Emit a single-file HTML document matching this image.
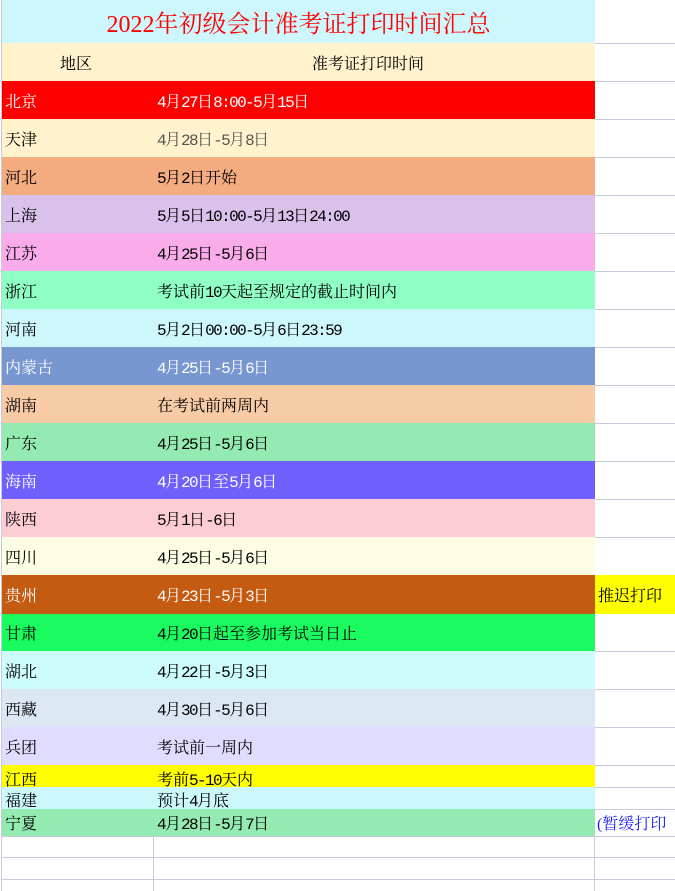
<!DOCTYPE html>
<html><head><meta charset="utf-8"><style>
body{margin:0;width:675px;height:891px;background:#fff;position:relative;overflow:hidden;font-family:"Liberation Serif","Noto Serif CJK SC",serif;font-size:16px;}
.r{position:absolute;left:2px;width:593px;}
.a,.b{position:absolute;top:0;bottom:0;display:flex;align-items:center;white-space:nowrap}
.a{left:3px}.b{left:155px}
.m{font-family:"Liberation Mono",monospace;font-size:16px;letter-spacing:-1.6px;}
.g{position:absolute;background:#c6cad9}
.w{color:#fff}
</style></head><body>
<div class="g" style="left:1px;top:0;width:1px;height:891px"></div>
<div class="g" style="left:153px;top:836px;width:1px;height:55px"></div>
<div class="g" style="left:594px;top:0;width:1px;height:891px"></div>
<div class="g" style="left:595px;top:43px;width:80px;height:1px"></div>
<div class="g" style="left:595px;top:81px;width:80px;height:1px"></div>
<div class="g" style="left:595px;top:119px;width:80px;height:1px"></div>
<div class="g" style="left:595px;top:157px;width:80px;height:1px"></div>
<div class="g" style="left:595px;top:195px;width:80px;height:1px"></div>
<div class="g" style="left:595px;top:233px;width:80px;height:1px"></div>
<div class="g" style="left:595px;top:271px;width:80px;height:1px"></div>
<div class="g" style="left:595px;top:309px;width:80px;height:1px"></div>
<div class="g" style="left:595px;top:347px;width:80px;height:1px"></div>
<div class="g" style="left:595px;top:385px;width:80px;height:1px"></div>
<div class="g" style="left:595px;top:423px;width:80px;height:1px"></div>
<div class="g" style="left:595px;top:461px;width:80px;height:1px"></div>
<div class="g" style="left:595px;top:499px;width:80px;height:1px"></div>
<div class="g" style="left:595px;top:537px;width:80px;height:1px"></div>
<div class="g" style="left:595px;top:651px;width:80px;height:1px"></div>
<div class="g" style="left:595px;top:689px;width:80px;height:1px"></div>
<div class="g" style="left:595px;top:727px;width:80px;height:1px"></div>
<div class="g" style="left:595px;top:765px;width:80px;height:1px"></div>
<div class="g" style="left:595px;top:787px;width:80px;height:1px"></div>
<div class="g" style="left:595px;top:809px;width:80px;height:1px"></div>
<div class="g" style="left:2px;top:836px;width:673px;height:1px"></div>
<div class="g" style="left:2px;top:857px;width:673px;height:1px"></div>
<div class="g" style="left:2px;top:879px;width:673px;height:1px"></div>

<div class="r" style="top:0;height:43px;background:#cdf7fc;color:#f00;font-size:24px;display:flex;align-items:center;justify-content:center">2022年初级会计准考证打印时间汇总</div>
<div class="r" style="top:43px;height:38px;background:#fff2cc"><div class="a" style="left:58px">地区</div><div class="b" style="left:310px">准考证打印时间</div></div>

<div class="r w" style="top:81px;height:38px;background:#ff0000"><div class="a">北京</div><div class="b"><span><span class="m">4</span>月<span class="m">27</span>日<span class="m">8:00-5</span>月<span class="m">15</span>日</span></div></div>
<div class="r" style="top:119px;height:38px;background:#fff2cc"><div class="a">天津</div><div class="b" style="color:#555"><span><span class="m">4</span>月<span class="m">28</span>日<span class="m">-5</span>月<span class="m">8</span>日</span></div></div>
<div class="r" style="top:157px;height:38px;background:#f4ab7f"><div class="a">河北</div><div class="b"><span><span class="m">5</span>月<span class="m">2</span>日开始</span></div></div>
<div class="r" style="top:195px;height:38px;background:#d9c1ec"><div class="a">上海</div><div class="b"><span><span class="m">5</span>月<span class="m">5</span>日<span class="m">10:00-5</span>月<span class="m">13</span>日<span class="m">24:00</span></span></div></div>
<div class="r" style="top:233px;height:38px;background:#f9abea"><div class="a">江苏</div><div class="b"><span><span class="m">4</span>月<span class="m">25</span>日<span class="m">-5</span>月<span class="m">6</span>日</span></div></div>
<div class="r" style="top:271px;height:38px;background:#90ffc4"><div class="a">浙江</div><div class="b"><span>考试前<span class="m">10</span>天起至规定的截止时间内</span></div></div>
<div class="r" style="top:309px;height:38px;background:#cdf7fc"><div class="a">河南</div><div class="b"><span><span class="m">5</span>月<span class="m">2</span>日<span class="m">00:00-5</span>月<span class="m">6</span>日<span class="m">23:59</span></span></div></div>
<div class="r w" style="top:347px;height:38px;background:#7896d0"><div class="a">内蒙古</div><div class="b"><span><span class="m">4</span>月<span class="m">25</span>日<span class="m">-5</span>月<span class="m">6</span>日</span></div></div>
<div class="r" style="top:385px;height:38px;background:#f7cba6"><div class="a">湖南</div><div class="b">在考试前两周内</div></div>
<div class="r" style="top:423px;height:38px;background:#94ebb2"><div class="a">广东</div><div class="b"><span><span class="m">4</span>月<span class="m">25</span>日<span class="m">-5</span>月<span class="m">6</span>日</span></div></div>
<div class="r w" style="top:461px;height:38px;background:#6f5ffd"><div class="a">海南</div><div class="b"><span><span class="m">4</span>月<span class="m">20</span>日至<span class="m">5</span>月<span class="m">6</span>日</span></div></div>
<div class="r" style="top:499px;height:38px;background:#fdccd4"><div class="a">陕西</div><div class="b"><span><span class="m">5</span>月<span class="m">1</span>日<span class="m">-6</span>日</span></div></div>
<div class="r" style="top:537px;height:38px;background:#fefce2"><div class="a">四川</div><div class="b"><span><span class="m">4</span>月<span class="m">25</span>日<span class="m">-5</span>月<span class="m">6</span>日</span></div></div>
<div class="r w" style="top:575px;height:39px;background:#c55a11"><div class="a">贵州</div><div class="b"><span><span class="m">4</span>月<span class="m">23</span>日<span class="m">-5</span>月<span class="m">3</span>日</span></div></div>
<div style="position:absolute;left:595px;top:575px;width:80px;height:39px;background:#ffff00;display:flex;align-items:center;padding-left:3px;box-sizing:border-box;white-space:nowrap">推迟打印</div>
<div class="r" style="top:614px;height:37px;background:#1afb5f"><div class="a">甘肃</div><div class="b"><span><span class="m">4</span>月<span class="m">20</span>日起至参加考试当日止</span></div></div>
<div class="r" style="top:651px;height:38px;background:#cdfcfc"><div class="a">湖北</div><div class="b"><span><span class="m">4</span>月<span class="m">22</span>日<span class="m">-5</span>月<span class="m">3</span>日</span></div></div>
<div class="r" style="top:689px;height:38px;background:#dce7f4"><div class="a">西藏</div><div class="b"><span><span class="m">4</span>月<span class="m">30</span>日<span class="m">-5</span>月<span class="m">6</span>日</span></div></div>
<div class="r" style="top:727px;height:38px;background:#e0dcfe"><div class="a">兵团</div><div class="b">考试前一周内</div></div>
<div class="r" style="top:765px;height:22px;background:#ffff00"><div class="a" style="top:4px">江西</div><div class="b" style="top:4px"><span>考前<span class="m">5-10</span>天内</span></div></div>
<div class="r" style="top:787px;height:22px;background:#ccf7fc"><div class="a" style="top:2px">福建</div><div class="b" style="top:2px"><span>预计<span class="m">4</span>月底</span></div></div>
<div class="r" style="top:809px;height:27px;background:#94ebb2"><div class="a">宁夏</div><div class="b"><span><span class="m">4</span>月<span class="m">28</span>日<span class="m">-5</span>月<span class="m">7</span>日</span></div></div>
<div style="position:absolute;left:597px;top:809px;height:27px;display:flex;align-items:center;color:#2020ff;white-space:nowrap">(暂缓打印</div>
</body></html>
